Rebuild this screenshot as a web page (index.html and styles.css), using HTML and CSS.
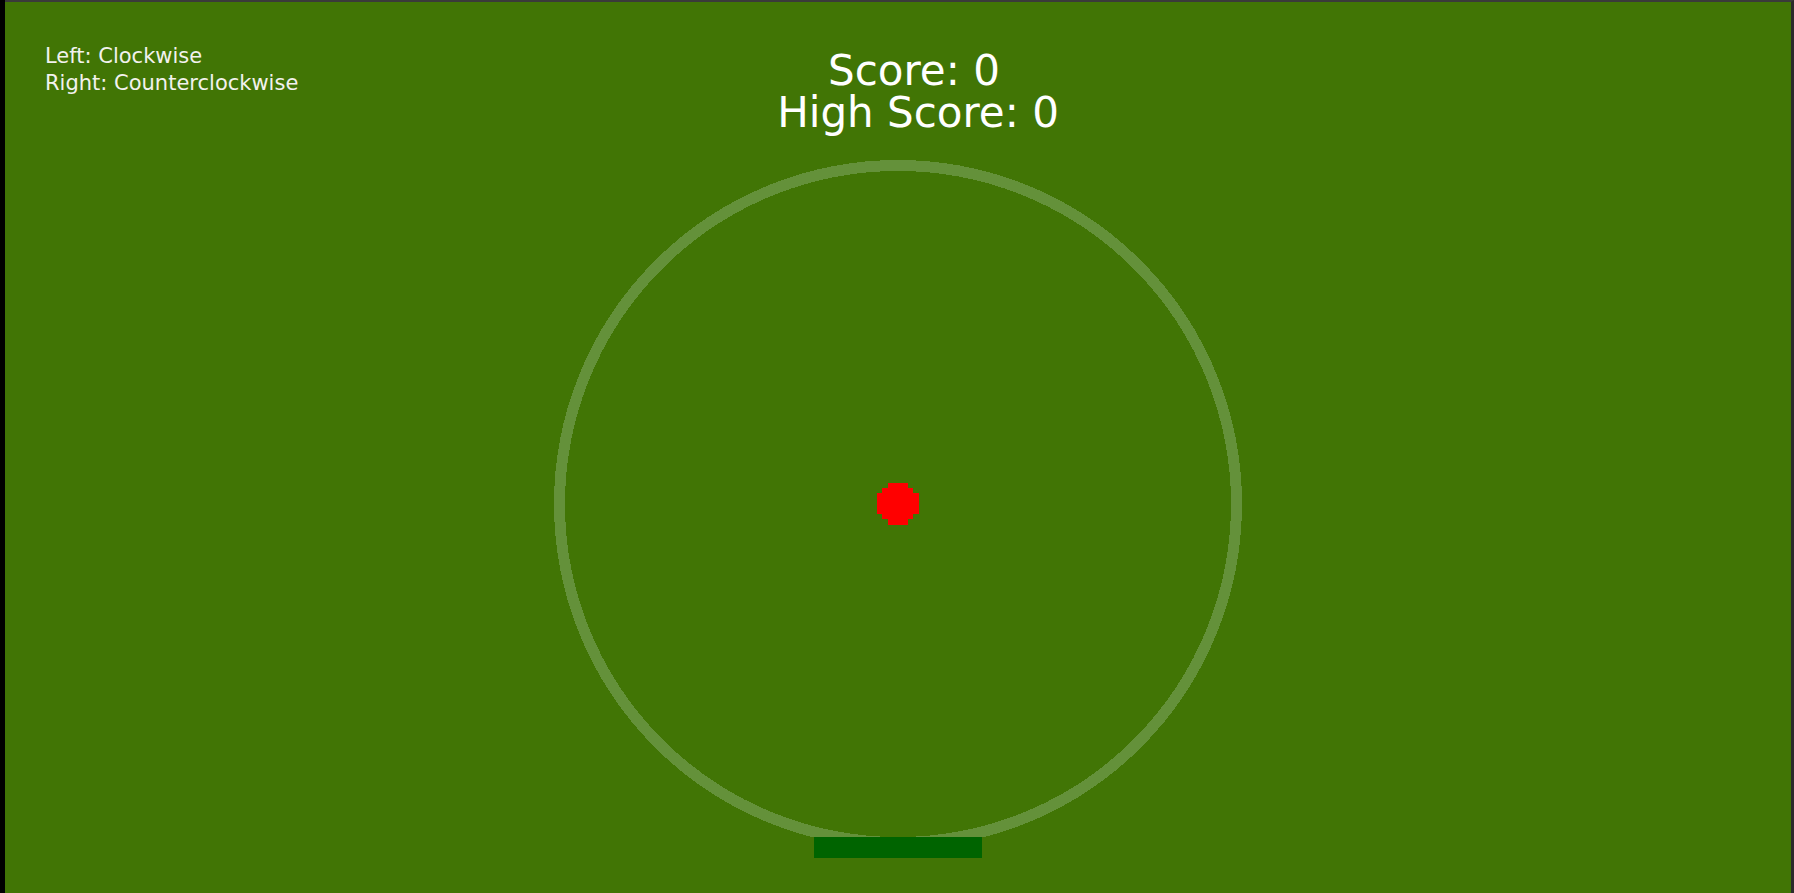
FILE: index.html
```html
<!DOCTYPE html>
<html lang="en">
<head>
<meta charset="utf-8">
<title>Circle Game</title>
<link rel="stylesheet" href="styles.css">
</head>
<body>
<div class="frame">
  <div class="screen">
    <svg class="board" width="1786" height="891" viewBox="0 0 1786 891" xmlns="http://www.w3.org/2000/svg">
      <circle class="ring" cx="893" cy="502" r="338.5"/>
      <rect class="paddle" x="809" y="835" width="168" height="21"/>
      <polygon class="ball" points="882.7,481.3 903.3,481.3 903.3,486.3 908.3,486.3 908.3,491.3 914,491.3 914,512.3 908.3,512.3 908.3,517.3 903.3,517.3 903.3,523 882.7,523 882.7,517.3 877.3,517.3 877.3,512.3 872.3,512.3 872.3,491.3 877.3,491.3 877.3,486.3 882.7,486.3"/>
    </svg>
    <div class="controls">
      <div>Left: Clockwise</div>
      <div>Right: Counterclockwise</div>
    </div>
    <div class="scores">
      <div class="score">Score: 0</div>
      <div class="high">High Score: 0</div>
    </div>
  </div>
</div>
</body>
</html>
```
FILE: styles.css
```css
html, body {
  margin: 0;
  padding: 0;
  background: #000;
  overflow: hidden;
}
.frame {
  width: 1794px;
  height: 893px;
  display: flex;
  background: #000;
}
.screen {
  position: relative;
  margin-left: 5px;
  width: 1786px;
  height: 891px;
  border-top: 2px solid #3a3a3a;
  border-right: 3px solid #2b2b2b;
  background: #417505;
  font-family: "DejaVu Sans", sans-serif;
  overflow: hidden;
}
.board {
  position: absolute;
  left: 0;
  top: 0;
}
.ring {
  fill: none;
  stroke: #64913a;
  stroke-width: 11;
  shape-rendering: crispEdges;
}
.paddle {
  fill: #006400;
}
.ball {
  fill: #ff0000;
  shape-rendering: crispEdges;
}
.controls {
  position: absolute;
  left: 40px;
  top: 40.5px;
  font-size: 21px;
  line-height: 27px;
  color: #f2f2ee;
}
.scores {
  position: absolute;
  left: 609px;
  top: 47.5px;
  width: 600px;
  text-align: center;
  font-size: 42px;
  line-height: 42px;
  color: #ffffff;
}
.high {
  padding-left: 8px;
}
```
